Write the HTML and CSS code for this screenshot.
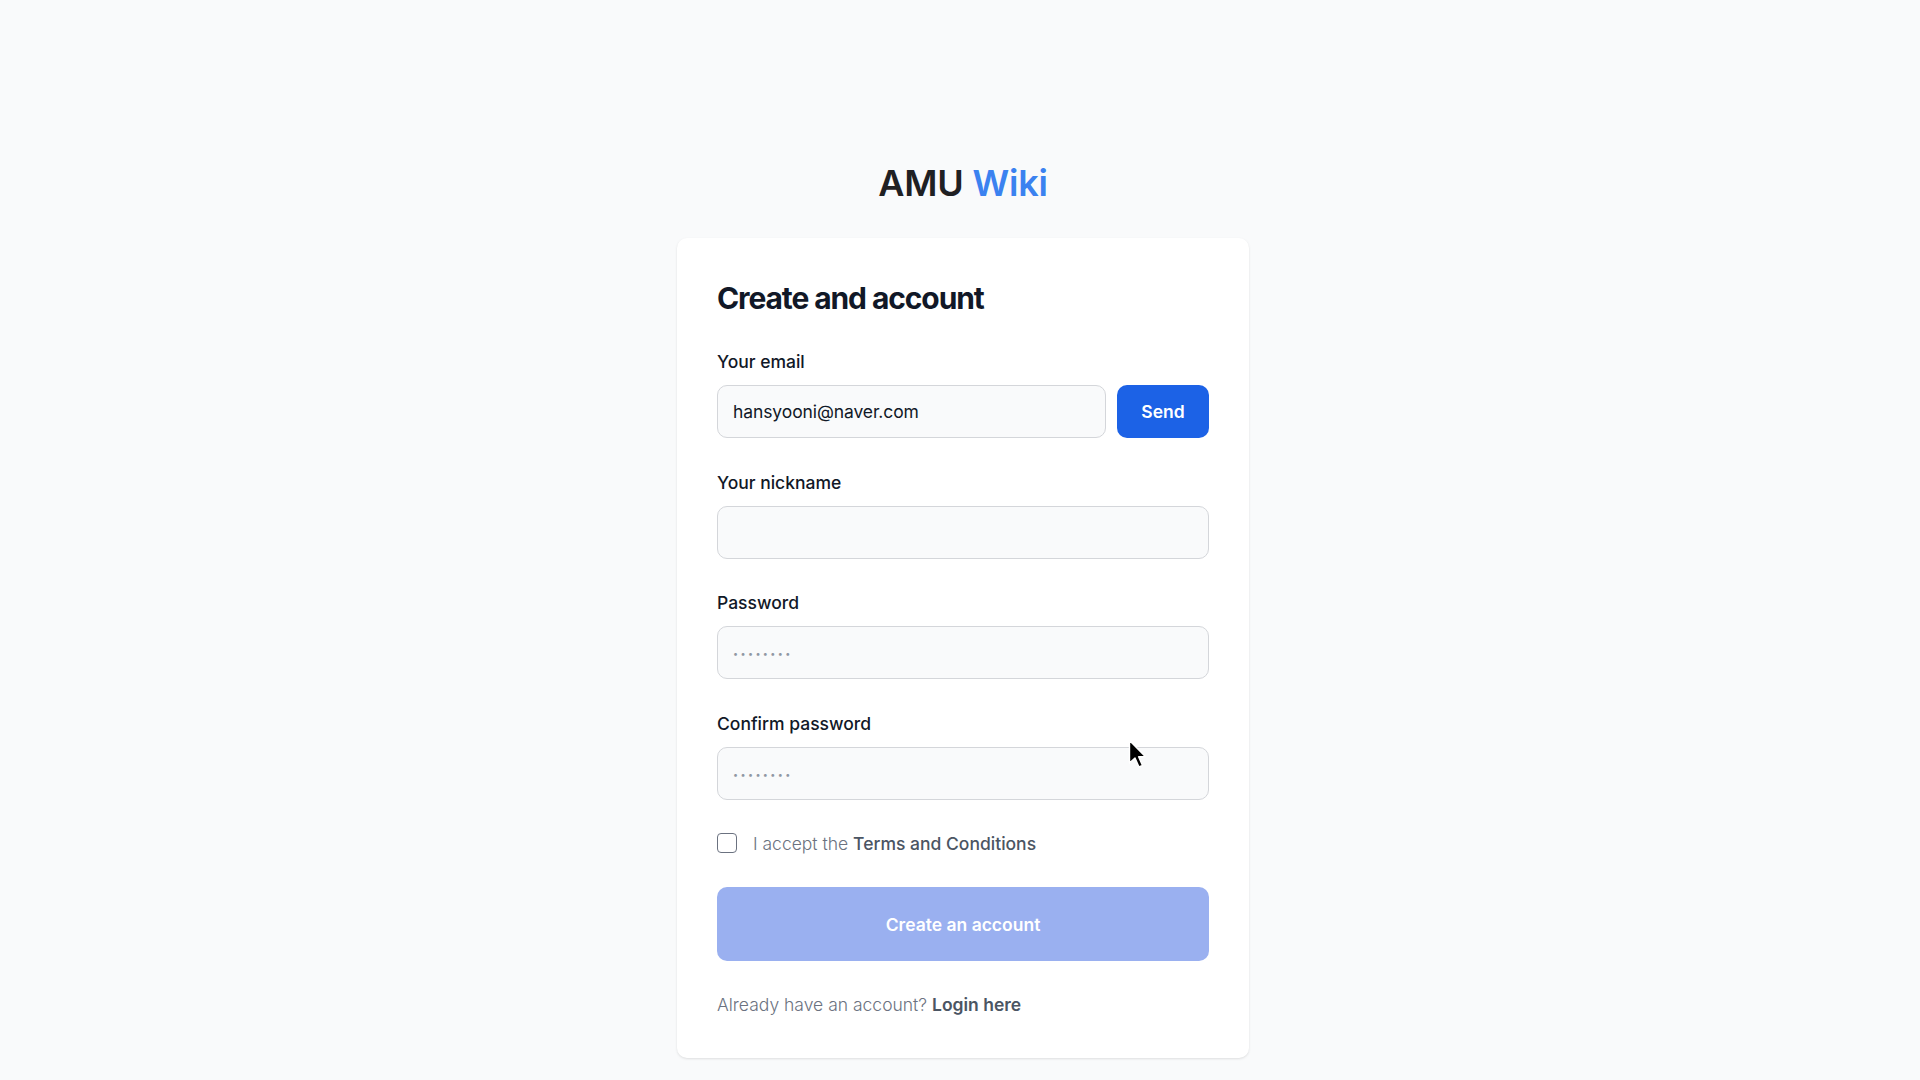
FILE: index.html
```html
<!DOCTYPE html>
<html lang="en">
<head>
<meta charset="utf-8">
<title>AMU Wiki - Create an account</title>
<link rel="stylesheet" href="styles.css">
</head>
<body>
<main class="page">
  <h1 class="brand">AMU <span class="brand-accent">Wiki</span></h1>
  <section class="card">
    <h2 class="card-title">Create and account</h2>
    <form class="form">
      <div class="field">
        <label class="label" for="email">Your email</label>
        <div class="email-row">
          <input class="input input-grow" id="email" type="email" value="hansyooni@naver.com">
          <button class="btn-send" type="button">Send</button>
        </div>
      </div>
      <div class="field">
        <label class="label" for="nick">Your nickname</label>
        <input class="input" id="nick" type="text">
      </div>
      <div class="field">
        <label class="label" for="pw">Password</label>
        <input class="input input-pw" id="pw" type="password" placeholder="••••••••">
      </div>
      <div class="field">
        <label class="label" for="pw2">Confirm password</label>
        <input class="input input-pw" id="pw2" type="password" placeholder="••••••••">
      </div>
      <label class="terms">
        <span class="checkbox"></span>
        <span class="terms-text">I accept the <span class="terms-link">Terms and Conditions</span></span>
      </label>
      <button class="btn-primary" type="button">Create an account</button>
      <p class="footer-text">Already have an account? <a class="footer-link">Login here</a></p>
    </form>
  </section>
</main>
<svg class="cursor" width="19" height="30" viewBox="0 0 19 30" aria-hidden="true">
  <path d="M1.5 1.5 L1.5 24 L7 19 L11 28 L14.5 26.5 L10.6 17.8 L17.5 17.8 Z" fill="#000" stroke="#fff" stroke-width="1.4" stroke-linejoin="round"/>
</svg>
</body>
</html>
```

FILE: styles.css
```css
* {
  box-sizing: border-box;
}

html, body {
  margin: 0;
  padding: 0;
}

body {
  background: #f9fafb;
  font-family: Inter, "Noto Sans", "Liberation Sans", sans-serif;
  color: #111827;
  min-height: 1080px;
}

.page {
  display: flex;
  flex-direction: column;
  align-items: center;
  padding: 163px 0 0 6px;
}

.brand {
  margin: 0 0 35px;
  font-size: 36px;
  line-height: 40px;
  font-weight: 600;
  color: #1f2023;
  letter-spacing: -0.2px;
}

.brand-accent {
  color: #3b82f0;
}

.card {
  width: 572px;
  background: #ffffff;
  border-radius: 10px;
  box-shadow: 0 1px 3px rgba(0, 0, 0, 0.08), 0 1px 2px rgba(0, 0, 0, 0.04);
  padding: 42px 40px 40px;
}

.card-title {
  margin: 0 0 32px;
  font-size: 30px;
  line-height: 36px;
  font-weight: 700;
  letter-spacing: -1.1px;
  color: #111827;
}

.form {
  display: flex;
  flex-direction: column;
}

.field {
  display: flex;
  flex-direction: column;
  margin-bottom: 30.67px;
}

.label {
  font-size: 17.5px;
  line-height: 27px;
  font-weight: 500;
  color: #111827;
  margin-bottom: 10px;
}

.email-row {
  display: flex;
  gap: 11px;
}

.input {
  display: block;
  width: 100%;
  height: 53px;
  flex: none;
  background: #f9fafb;
  border: 1px solid #d4d6da;
  border-radius: 10px;
  padding: 0 15px;
  font-family: Inter, "Noto Sans", sans-serif;
  font-size: 17.5px;
  letter-spacing: -0.1px;
  color: #111827;
  outline: none;
}

.input-grow {
  flex: 1 1 auto;
  width: auto;
  min-width: 0;
}

.input-pw {
  padding-bottom: 4px;
}

.input-pw::placeholder {
  color: #9097a3;
  font-size: 9px;
  letter-spacing: 2.4px;
}

.btn-send {
  width: 92px;
  height: 53px;
  flex: none;
  border: none;
  border-radius: 10px;
  background: #1c62e6;
  color: #ffffff;
  font-family: Inter, "Noto Sans", sans-serif;
  font-size: 17.5px;
  font-weight: 600;
}

.terms {
  display: flex;
  align-items: center;
  gap: 16px;
  margin-top: -1px;
  height: 27px;
}

.checkbox {
  width: 20px;
  height: 20px;
  border: 1.5px solid #6b7280;
  border-radius: 4px;
  background: #ffffff;
  flex: none;
}

.terms-text {
  font-size: 17.5px;
  line-height: 27px;
  font-weight: 300;
  color: #6b7280;
}

.terms-link {
  font-weight: 500;
  color: #4b5563;
}

.btn-primary {
  margin-top: 30.5px;
  height: 74px;
  width: 100%;
  border: none;
  border-radius: 10px;
  background: #9ab0f0;
  color: #ffffff;
  font-family: Inter, "Noto Sans", sans-serif;
  font-size: 17.5px;
  font-weight: 600;
}

.footer-text {
  margin: 30px 0 0;
  font-size: 17.5px;
  line-height: 27px;
  font-weight: 300;
  color: #6b7280;
}

.footer-link {
  font-weight: 600;
  color: #4b5563;
}

.cursor {
  position: absolute;
  left: 1128px;
  top: 739px;
}
```
